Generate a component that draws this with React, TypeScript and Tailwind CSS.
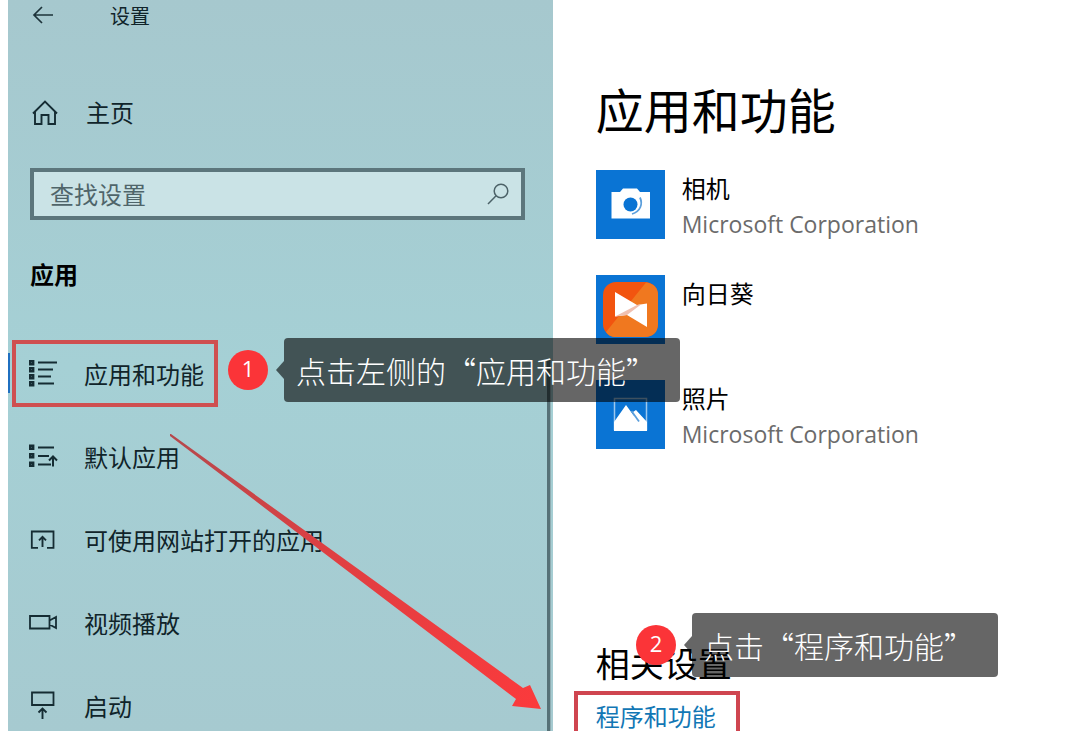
import React from 'react';

interface NavItem {
  id: string;
  label: string;
  icon: React.ReactNode;
}

interface AppEntry {
  name: string;
  publisher?: string;
  icon: React.ReactNode;
}

const BackIcon = () => (
  <svg width="22" height="20" viewBox="0 0 22 20" fill="none" stroke="#1d333a" strokeWidth="1.7">
    <path d="M21 9H2M10 1L2 9L10 17" />
  </svg>
);

const HomeIcon = () => (
  <svg width="26" height="26" viewBox="0 0 26 26" fill="none" stroke="#152c33" strokeWidth="1.9">
    <path d="M1 14.5L13 2.5L25 14.5" />
    <path d="M3 12.5V25H9.500V16H16.500V25H23V12.5" />
  </svg>
);

const SearchIcon = () => (
  <svg width="22" height="22" viewBox="0 0 22 22" fill="none" stroke="#4c6268" strokeWidth="1.5">
    <circle cx="14" cy="8" r="6.8" />
    <path d="M9.1 12.8L1 21" />
  </svg>
);

const AppsIcon = () => (
  <svg width="30" height="28" viewBox="0 0 30 28" fill="none" stroke="#152c33">
    <path d="M10 2.500H29M10 9.500H25M10 16.500H23M10 23.500H26" strokeWidth="1.9" />
    <path d="M2.2 1.2h3v3h-3zM2.200 8.200h3v3h-3zM2.200 15.200h3v3h-3zM2.200 22.200h3v3h-3z" strokeWidth="2.4" />
  </svg>
);

const DefaultAppsIcon = () => (
  <svg width="30" height="26" viewBox="0 0 30 26" fill="none" stroke="#152c33">
    <path d="M10 3.500H26M10 12H21M10 20.500H23" strokeWidth="1.8" />
    <path d="M2.200 1.700h3v3h-3zM2.200 10.200h3v3h-3zM2.200 18.700h3v3h-3z" strokeWidth="2.4" />
    <path d="M25 22.500V13.500M21 16.500L25 12.500L29 16.500" strokeWidth="2" />
  </svg>
);

const WebAppsIcon = () => (
  <svg width="30" height="22" viewBox="0 0 30 22" fill="none" stroke="#152c33" strokeWidth="1.8">
    <path d="M10 18.800H3.800V2.500H25.500V18.800H19" />
    <path d="M14.500 18V8M11 11.300L14.500 7.800L18 11.300" strokeWidth="1.9" />
  </svg>
);

const VideoIcon = () => (
  <svg width="30" height="18" viewBox="0 0 30 18" fill="none" stroke="#152c33" strokeWidth="1.8">
    <path d="M2 2H21.500V14.500H2zM21.500 6.500L28 3V14L21.500 10.500" />
  </svg>
);

const StartupIcon = () => (
  <svg width="30" height="30" viewBox="0 0 30 30" fill="none" stroke="#152c33" strokeWidth="1.8">
    <path d="M4 1.500H25.500V14H4z" />
    <path d="M14.500 28V18M10.500 21.500L14.500 17.500L18.500 21.500" strokeWidth="1.9" />
  </svg>
);

const CameraTile = () => (
  <svg viewBox="0 0 69 69" className="size-full">
    <path d="M15.500 22H24L27 18.500H41L44 22H54V48.500H15.500z" fill="#fff" />
    <circle cx="34.500" cy="34.500" r="7" fill="#0a74d4" />
    <path d="M44 27.500C47 34 44.500 41.500 36 44" fill="none" stroke="#5b9fdc" strokeWidth="1.800" />
  </svg>
);

const SunflowerTile = () => (
  <svg viewBox="0 0 69 69" className="size-full">
    <rect x="7" y="7" width="55" height="55" rx="13" fill="#f2540f" />
    <path d="M50 7.500C58 8.500 62 13 62 20V49C62 57 57 62 49 62H20C15 62 12 60 10 57z" fill="#f0781f" />
    <path d="M19 17L41 30L51 28.500V52L31 40L19 41.500z" fill="#fff" />
    <path d="M19 41.500L41 30L45 29.500L31 40z" fill="#f0c0b0" />
  </svg>
);

const PhotosTile = () => (
  <svg viewBox="0 0 69 69" className="size-full">
    <rect x="18.500" y="18.500" width="32" height="31" fill="none" stroke="#9cc7ee" strokeWidth="1.500" />
    <path d="M18 42L30 25L38 36L37 32L40 30L51 42V51H18z" fill="#fff" />
    <path d="M35.500 31L43 41.500" stroke="#5b9fdc" strokeWidth="1.800" />
  </svg>
);

const navItems: NavItem[] = [
  { id: 'apps', label: '应用和功能', icon: <AppsIcon /> },
  { id: 'default', label: '默认应用', icon: <DefaultAppsIcon /> },
  { id: 'web', label: '可使用网站打开的应用', icon: <WebAppsIcon /> },
  { id: 'video', label: '视频播放', icon: <VideoIcon /> },
  { id: 'startup', label: '启动', icon: <StartupIcon /> },
];

const apps: AppEntry[] = [
  { name: '相机', publisher: 'Microsoft Corporation', icon: <CameraTile /> },
  { name: '向日葵', icon: <SunflowerTile /> },
  { name: '照片', publisher: 'Microsoft Corporation', icon: <PhotosTile /> },
];

interface CalloutProps {
  step: number;
  text: string;
  className: string;
}

// Numbered step with its speech bubble
const Callout: React.FC<CalloutProps> = ({ step, text, className }) => (
  <div className={`absolute flex items-center ${className}`}>
    <span className="size-10 rounded-full bg-[#fb3438] text-white text-[22px] leading-9 text-center font-['Open_Sans',sans-serif]">
      {step}
    </span>
    <svg width="8" height="18" viewBox="0 0 8 18" className="ml-2">
      <path d="M8 0V18L0 9z" fill="#000" fillOpacity="0.6" />
    </svg>
    <span className="h-16 rounded bg-black/60 pl-3 pr-6 text-white text-[30px] leading-16 font-light whitespace-nowrap">
      {text}
    </span>
  </div>
);

export default function App() {
  return (
    <div
      lang="zh-CN"
      className="relative flex h-screen overflow-hidden bg-white pl-2 text-[#10242a] font-['Noto_Sans_CJK_SC',sans-serif]"
    >
      {/* Sidebar */}
      <aside className="relative w-[51%] shrink-0 bg-linear-to-b from-[#a6c8ce] via-[#a5d0d5] to-[#a6cad0]">
        <header className="flex h-8 items-center pl-6">
          <button aria-label="返回">
            <BackIcon />
          </button>
          <span className="ml-14 text-xl">设置</span>
        </header>

        <a href="#home" className="mt-14 flex h-12 items-center gap-7 pl-6 text-2xl">
          <HomeIcon />
          主页
        </a>

        <div className="mt-8 ml-[22px] mr-7 flex h-[52px] items-center border-4 border-[#5c767c] bg-[#cae3e6] pr-3">
          <input
            type="text"
            aria-label="查找设置"
            placeholder="查找设置"
            className="min-w-0 flex-1 bg-transparent pl-4 text-2xl outline-none placeholder:text-[#4f656a]"
          />
          <SearchIcon />
        </div>

        <h2 className="mt-9 pl-[22px] text-2xl leading-9 font-bold text-black">应用</h2>

        <nav className="mt-12 ml-1 flex flex-col items-start gap-4">
          {navItems.map((item) => (
            <button
              key={item.id}
              className={`flex h-[67px] items-center gap-[26px] border-4 pl-3 pr-[10px] text-2xl whitespace-nowrap ${
                item.id === 'apps' ? 'border-[#cf4f50]' : 'border-transparent'
              }`}
            >
              {item.icon}
              {item.label}
            </button>
          ))}
        </nav>

        <div className="absolute left-0 top-[353px] h-10 w-0.5 bg-[#1f6fc0]" />
        <div className="absolute right-0.5 top-[360px] bottom-0 w-1 border-r border-[#8fadb2] bg-[#567177]" />
      </aside>

      {/* Content */}
      <main className="flex-1 pl-[43px] pt-[72px] text-black">
        <h1 className="text-5xl leading-[72px] whitespace-nowrap">应用和功能</h1>

        <ul className="mt-[26px] flex flex-col gap-8">
          {apps.map((app) => (
            <li key={app.name} className="flex h-[73px] gap-[17px]">
              <div className="size-[69px] shrink-0 bg-[#0a74d4]">{app.icon}</div>
              <div>
                <p className="text-2xl leading-9">{app.name}</p>
                {app.publisher && (
                  <p className="text-[23px] leading-9 text-[#6b6b6b] font-['Open_Sans',sans-serif] whitespace-nowrap">
                    {app.publisher}
                  </p>
                )}
              </div>
            </li>
          ))}
        </ul>

        <h2 className="mt-[186px] text-[34px] leading-12 whitespace-nowrap">相关设置</h2>
        <a
          href="#programs"
          className="mt-1 -ml-[22px] inline-block border-4 border-[#cf4550] pl-[18px] pr-5 pt-[3px] pb-3 text-2xl leading-9 text-[#1277b5] whitespace-nowrap"
        >
          程序和功能
        </a>
      </main>

      {/* Annotations */}
      <svg width="372" height="276" viewBox="0 0 372 276" className="absolute left-[170px] top-[434px]">
        <defs>
          <linearGradient id="shaft" x1="0" y1="0" x2="1" y2="1">
            <stop offset="0" stopColor="#b5484c" />
            <stop offset="0.45" stopColor="#e03f42" />
            <stop offset="1" stopColor="#fb3a3c" />
          </linearGradient>
        </defs>
        <path d="M0 0L1 0L353 254L360 251L371 275L342 272L346 265L0 2z" fill="url(#shaft)" />
      </svg>
      <Callout step={1} text="点击左侧的“应用和功能”" className="left-[228px] top-[338px]" />
      <Callout step={2} text="点击“程序和功能”" className="left-[636px] top-[613px]" />
    </div>
  );
}
